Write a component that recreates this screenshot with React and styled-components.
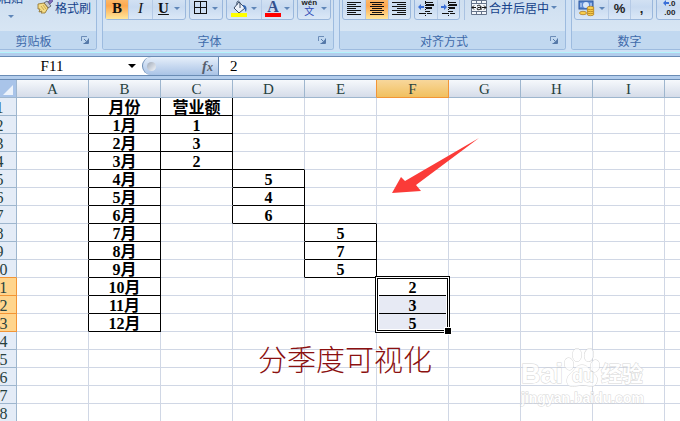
import styled, { createGlobalStyle, css } from "styled-components";

const GlobalStyle = createGlobalStyle`
    * {
        box-sizing: border-box;
    }
    body {
        margin: 0;
        overflow: hidden;
        font-family: "Liberation Sans", "Noto Sans CJK SC", sans-serif;
    }
    button,
    input {
        margin: 0;
        padding: 0;
        border: 0;
        background: none;
        font: inherit;
        color: inherit;
    }
`;

const COLUMNS = "ABCDEFGHIJKLMN".split("");
const ROW_COUNT = 24;

const cells = {
    B1: "月份",
    B2: "1月",
    B3: "2月",
    B4: "3月",
    B5: "4月",
    B6: "5月",
    B7: "6月",
    B8: "7月",
    B9: "8月",
    B10: "9月",
    B11: "10月",
    B12: "11月",
    B13: "12月",
    C1: "营业额",
    C2: "1",
    C3: "3",
    C4: "2",
    D5: "5",
    D6: "4",
    D7: "6",
    E8: "5",
    E9: "7",
    E10: "5",
    F11: "2",
    F12: "3",
    F13: "5",
};

const hasValue = (col, row) => Boolean(cells[`${COLUMNS[col]}${row}`]);
const isSelectedRow = (row) => row >= 11 && row <= 13;

function Caret() {
    return (
        <svg width="6" height="3" viewBox="0 0 6 3" aria-hidden="true">
            <path d="M0 0h6L3 3z" fill="#5f86b8" />
        </svg>
    );
}

function BrushIcon() {
    return (
        <svg width="16" height="16" viewBox="0 0 16 16" aria-hidden="true">
            <path d="M10 4l4-4 2 2-4 4z" fill="#7d6bb8" stroke="#4b3f86" strokeWidth="0.6" />
            <path d="M7 4l3-2 4 5-3 2z" fill="#c3c8d2" stroke="#4d535e" strokeWidth="0.8" />
            <path d="M1 5l6-1 4 5-3 5-4 0 1-2-3 1 1-3-2 0z" fill="#f4dc86" stroke="#8d6d28" strokeWidth="0.8" />
            <path d="M4 7l3 4M6 6l3 4" stroke="#c29b3f" strokeWidth="0.8" />
        </svg>
    );
}

function BorderIcon() {
    return (
        <svg width="14" height="14" viewBox="0 0 14 14" shapeRendering="crispEdges" aria-hidden="true">
            <path d="M.5.5h12v12h-12zM6.5 0v13M0 6.5h13" fill="none" stroke="#111" />
        </svg>
    );
}

function FillIcon() {
    return (
        <svg width="17" height="17" viewBox="0 0 17 17" aria-hidden="true">
            <path d="M3 8l5-6 6 6-6 5z" fill="#eef3fa" stroke="#3d4f69" />
            <path d="M6 5c-1-5 3-5 3-1v4" fill="none" stroke="#3d4f69" />
            <path d="M12 5c4 0 4 4 3 7-2-2 0-4-3-5z" fill="#3468b4" />
            <path d="M0 13h16v4H0z" fill="#ff0" />
        </svg>
    );
}

function AlignIcon({ type }) {
    const short = { left: 0, center: 2, right: 5 }[type];
    const len = type === "center" ? 10 : 9;
    return (
        <svg width="15" height="13" viewBox="0 0 15 13" shapeRendering="crispEdges" aria-hidden="true">
            {[0, 2, 4, 6, 8, 10, 12].map((y, i) => (
                <rect key={y} x={i % 2 ? short : 0} y={y} width={i % 2 ? len : 14} height="1" fill="#111" />
            ))}
        </svg>
    );
}

function IndentIcon({ increase }) {
    return (
        <svg width="16" height="15" viewBox="0 0 16 15" aria-hidden="true">
            <path d="M7 1.5h8M7 10.5h5M1 12.5h6M9 12.5h5" stroke="#111" shapeRendering="crispEdges" />
            <path d="M8 4h8M8 7h6" stroke="#111" strokeWidth="2" shapeRendering="crispEdges" />
            <path d="M7.5 0v15" stroke="#111" strokeDasharray="1 1" />
            <path d={increase ? "M6 6L3 3v2H0v2h3v2z" : "M0 6l3-3v2h3v2H3v2z"} fill="#3a6fd8" />
        </svg>
    );
}

function MergeIcon() {
    return (
        <svg width="16" height="15" viewBox="0 0 16 15" aria-hidden="true">
            <path d="M.5.5h15v14H.5zM.5 3.5h15M.5 11.5h15M5.5 0v3M10.5 0v3M5.5 12v3M10.5 12v3" fill="#f4f7fb" stroke="#66748a" />
            <path d="M1 7.5h4M11 7.5h4M3 5.5l-2 2 2 2M13 5.5l2 2-2 2" fill="none" stroke="#111" />
            <path d="M6 6c2-1.500 4-.5 4 1v3M10 7.500c-3-.5-4 .5-4 1.500s3 1 4-.5" fill="none" stroke="#111" />
        </svg>
    );
}

function CurrencyIcon() {
    return (
        <svg width="18" height="17" viewBox="0 0 18 17" aria-hidden="true">
            <rect x="1" y="1" width="14" height="8" fill="#5d8ad2" stroke="#28559d" />
            <ellipse cx="8" cy="5" rx="3" ry="3" fill="#d7e6fa" />
            <path d="M3 3v4M13 3v4" stroke="#d7e6fa" />
            {[14, 12, 10, 8].map((y) => (
                <ellipse key={y} cx="12.500" cy={y} rx="3.500" ry="1.700" fill="#f9cf4e" stroke="#a8741a" strokeWidth="0.7" />
            ))}
            <ellipse cx="5" cy="13" rx="3.500" ry="1.700" fill="#f9cf4e" stroke="#a8741a" strokeWidth="0.7" />
        </svg>
    );
}

function LauncherIcon() {
    return (
        <svg width="8" height="8" viewBox="0 0 8 8" aria-hidden="true">
            <path d="M.5 5V.5H6" fill="none" stroke="#6c8db8" />
            <path d="M3 3l2 2M7.500 2.500v5h-5" fill="none" stroke="#5579a9" />
            <path d="M3.500 7L7 3.500V7z" fill="#5579a9" />
        </svg>
    );
}

function Group({ title, width, children }) {
    return (
        <GroupWrap $width={width}>
            <GroupBody>{children}</GroupBody>
            <GroupCaption>
                <span>{title}</span>
                <Launcher type="button" aria-label={title}>
                    <LauncherIcon />
                </Launcher>
            </GroupCaption>
        </GroupWrap>
    );
}

function Ribbon() {
    return (
        <RibbonWrap>
            <Group title="剪贴板" width={110}>
                <PasteButton type="button">
                    <span>粘贴</span>
                    <Caret />
                </PasteButton>
                <TextButton type="button">
                    <BrushIcon />
                    格式刷
                </TextButton>
            </Group>
            <Group title="字体" width={232}>
                <Segment>
                    <Tool type="button" $w={22} $active>
                        <Glyph $bold>B</Glyph>
                    </Tool>
                    <Tool type="button" $w={24}>
                        <Glyph $italic>I</Glyph>
                    </Tool>
                    <Tool type="button" $w={33}>
                        <Glyph $bold $underline>U</Glyph>
                        <Caret />
                    </Tool>
                </Segment>
                <Segment>
                    <Tool type="button" $w={32} aria-label="边框">
                        <BorderIcon />
                        <Caret />
                    </Tool>
                </Segment>
                <Segment>
                    <Tool type="button" $w={34} aria-label="填充颜色">
                        <FillIcon />
                        <Caret />
                    </Tool>
                    <Tool type="button" $w={32}>
                        <FontColor>A</FontColor>
                        <Caret />
                    </Tool>
                </Segment>
                <Segment>
                    <Tool type="button" $w={32}>
                        <Phonetic>
                            <b>wén</b>
                            <span>文</span>
                        </Phonetic>
                        <Caret />
                    </Tool>
                </Segment>
            </Group>
            <Group title="对齐方式" width={227}>
                <Segment>
                    <Tool type="button" $w={22} aria-label="左对齐">
                        <AlignIcon type="left" />
                    </Tool>
                    <Tool type="button" $w={23} $active aria-label="居中">
                        <AlignIcon type="center" />
                    </Tool>
                    <Tool type="button" $w={22} aria-label="右对齐">
                        <AlignIcon type="right" />
                    </Tool>
                </Segment>
                <Segment>
                    <Tool type="button" $w={22} aria-label="减少缩进量">
                        <IndentIcon />
                    </Tool>
                    <Tool type="button" $w={22} aria-label="增加缩进量">
                        <IndentIcon increase />
                    </Tool>
                </Segment>
                <Separator />
                <TextButton type="button">
                    <MergeIcon />
                    合并后居中
                    <Caret />
                </TextButton>
            </Group>
            <Group title="数字" width={134}>
                <Segment>
                    <Tool type="button" $w={33} aria-label="会计数字格式">
                        <CurrencyIcon />
                        <Caret />
                    </Tool>
                    <Tool type="button" $w={22}>
                        <Symbol>%</Symbol>
                    </Tool>
                    <Tool type="button" $w={22}>
                        <Symbol>,</Symbol>
                    </Tool>
                </Segment>
                <Segment>
                    <Tool type="button" $w={24}>
                        <Decimal>
                            <span>
                                <svg width="6" height="6" viewBox="0 0 6 6" aria-hidden="true">
                                    <path d="M0 3l3-3v2h3v2H3v2z" fill="#3a6fd8" />
                                </svg>
                                .0
                            </span>
                            <span>.00</span>
                        </Decimal>
                    </Tool>
                    <Tool type="button" $w={24} aria-label="减少小数位数" />
                </Segment>
            </Group>
        </RibbonWrap>
    );
}

function FormulaBar() {
    return (
        <FormulaWrap>
            <NameInput aria-label="名称框" defaultValue="F11" />
            <NameArrow type="button" aria-label="名称">
                <svg width="8" height="4" viewBox="0 0 8 4" aria-hidden="true">
                    <path d="M0 0h8L4 4z" fill="#000" />
                </svg>
            </NameArrow>
            <FxHandle>
                <FxDot />
                <FxButton type="button">
                    f<small>x</small>
                </FxButton>
            </FxHandle>
            <FormulaInput aria-label="编辑栏" defaultValue="2" />
        </FormulaWrap>
    );
}

function Sheet() {
    const rows = Array.from({ length: ROW_COUNT }, (_, i) => i + 1);
    return (
        <SheetWrap>
            <Grid>
                <thead>
                    <tr>
                        <Corner>
                            <svg width="10" height="10" viewBox="0 0 10 10" aria-hidden="true">
                                <path d="M10 0v10H0z" fill="#edf3fb" />
                            </svg>
                        </Corner>
                        {COLUMNS.map((name) => (
                            <ColHead key={name} scope="col" $active={name === "F"} $beforeActive={name === "E"}>
                                {name}
                            </ColHead>
                        ))}
                    </tr>
                </thead>
                <tbody>
                    {rows.map((row) => (
                        <tr key={row}>
                            <RowHead scope="row" $active={isSelectedRow(row)} $beforeActive={row === 10}>
                                {row}
                            </RowHead>
                            {COLUMNS.map((name, col) => (
                                <Cell
                                    key={name}
                                    $right={hasValue(col, row) || hasValue(col + 1, row)}
                                    $bottom={hasValue(col, row) || hasValue(col, row + 1)}
                                    $shaded={name === "F" && (row === 12 || row === 13)}
                                >
                                    {cells[`${name}${row}`]}
                                    {name === "F" && row === 11 && <Selection />}
                                </Cell>
                            ))}
                        </tr>
                    ))}
                </tbody>
            </Grid>
            <Note>分季度可视化</Note>
            <Arrow width="90" height="60" viewBox="0 0 90 60" aria-hidden="true">
                <path d="M88 0L25 47l5 6-29 2 9-16 4 4z" fill="#fb3b38" />
            </Arrow>
            <Watermark>
                <Brand>
                    <span>Bai</span>
                    <Paw>
                        <svg width="38" height="42" viewBox="0 0 38 42" aria-hidden="true">
                            <g fill="#fff" stroke="#c8c8c8">
                                <ellipse cx="6" cy="18" rx="4.500" ry="6" transform="rotate(-10 6 18)" />
                                <ellipse cx="14" cy="9" rx="4.500" ry="6.500" />
                                <ellipse cx="26" cy="9" rx="4.500" ry="6.500" transform="rotate(10 26 9)" />
                                <ellipse cx="32" cy="20" rx="4.500" ry="6" transform="rotate(10 32 20)" />
                                <path d="M19 19c5 0 6 3 9 6s7 5 6 10-4 6-8 5-8-1-13 0-9 0-9-5 3-7 6-10 4-6 9-6z" />
                            </g>
                        </svg>
                        <b>du</b>
                    </Paw>
                    <span>经验</span>
                </Brand>
                <Site>jingyan.baidu.com</Site>
            </Watermark>
        </SheetWrap>
    );
}

function App() {
    return (
        <Page>
            <GlobalStyle />
            <Ribbon />
            <FormulaBar />
            <Sheet />
        </Page>
    );
}

const Page = styled.div`
    display: flex;
    flex-direction: column;
    height: 100vh;
    overflow: hidden;
    background: #b3cdec;
`;

const RibbonWrap = styled.div`
    display: flex;
    flex: none;
    gap: 5px;
    margin-left: -13px;
    height: 53px;
    padding-bottom: 2px;
    border-bottom: 1px solid #b4f4fb;
    background: #cfe1f5;
`;

const GroupWrap = styled.section`
    display: flex;
    flex: none;
    flex-direction: column;
    width: ${({ $width }) => $width}px;
    overflow: hidden;
    border: 1px solid #9dbbdf;
    border-top: 0;
    border-radius: 0 0 3px 3px;
    background: linear-gradient(#cfdff0, #dce9f6);
`;

const GroupBody = styled.div`
    display: flex;
    align-items: flex-end;
    flex: none;
    gap: 3px;
    height: 31px;
    padding: 0 2px 11px;
    color: #15428b;
    font-size: 12px;
`;

const GroupCaption = styled.div`
    display: flex;
    align-items: center;
    flex: 1;
    background: #c1d8f0;
    color: #3e6aaa;
    font-size: 12px;
    line-height: 18px;
    span {
        flex: 1;
        padding-top: 2px;
        text-align: center;
    }
`;

const Launcher = styled.button`
    display: flex;
    width: 14px;
    height: 14px;
    margin-right: 3px;
    padding: 2px;
`;

const Segment = styled.div`
    display: flex;
    flex: none;
    height: 26px;
    border: 1px solid #9ab7dc;
    border-radius: 3px;
    background: linear-gradient(#d9e6f5, #c8daf0 50%, #dbe8f7);
`;

const Tool = styled.button`
    display: flex;
    align-items: center;
    justify-content: space-evenly;
    width: ${({ $w }) => $w}px;
    height: 24px;
    padding-top: 2px;
    & + & {
        border-left: 1px solid #b5cae6;
    }
    ${({ $active }) =>
        $active &&
        css`
            background: linear-gradient(#fbc57b, #fda850 45%, #ffe79a);
        `}
`;

const Glyph = styled.span`
    font-family: "Liberation Serif", serif;
    font-size: 15px;
    line-height: 16px;
    color: #111;
    font-weight: ${({ $bold }) => ($bold ? 700 : 400)};
    font-style: ${({ $italic }) => ($italic ? "italic" : "normal")};
    text-decoration: ${({ $underline }) => ($underline ? "underline" : "none")};
`;

const FontColor = styled.span`
    width: 16px;
    border-bottom: 4px solid #f00;
    color: #34508f;
    font: 700 16px/13px "Liberation Serif", serif;
    text-align: center;
`;

const Phonetic = styled.span`
    display: flex;
    flex-direction: column;
    align-items: center;
    color: #2f4bb5;
    font-size: 10px;
    line-height: 10px;
    b {
        font-size: 8px;
        line-height: 8px;
        color: #222;
    }
`;

const Symbol = styled.span`
    color: #222;
    font-size: 13px;
    font-weight: 700;
`;

const Decimal = styled.span`
    display: flex;
    flex-direction: column;
    align-items: flex-end;
    color: #222;
    font-size: 8px;
    font-weight: 700;
    line-height: 9px;
`;

const Separator = styled.span`
    width: 1px;
    height: 24px;
    margin: 0 1px;
    background: #a9c2e2;
`;

const TextButton = styled.button`
    display: flex;
    align-items: center;
    flex: none;
    gap: 2px;
    height: 26px;
    padding: 0 2px;
    white-space: nowrap;
`;

const PasteButton = styled.button`
    display: flex;
    flex-direction: column;
    align-items: center;
    gap: 8px;
    width: 42px;
    padding-bottom: 2px;
    line-height: 16px;
`;

const FormulaWrap = styled.div`
    display: flex;
    flex: none;
    height: 20px;
    margin: 3px 0;
    border: 1px solid #6a8cb5;
    border-width: 1px 0;
    background: #fff;
    font-family: "Liberation Serif", "Noto Sans CJK SC", serif;
    font-size: 15px;
`;

const NameInput = styled.input`
    width: 104px;
    height: 18px;
    padding-top: 1px;
    text-align: center;
`;

const NameArrow = styled.button`
    display: flex;
    align-items: center;
    justify-content: flex-end;
    width: 32px;
    height: 18px;
`;

const FxHandle = styled.div`
    display: flex;
    align-items: center;
    justify-content: space-between;
    width: 77px;
    height: 18px;
    margin-left: 6px;
    padding: 0 5px 0 4px;
    border-left: 1px solid #6a8cb5;
    border-right: 1px solid #6a8cb5;
    border-radius: 9px 0 0 9px;
    background: linear-gradient(#e6effa, #a9c3e6);
`;

const FxDot = styled.span`
    width: 9px;
    height: 9px;
    border-radius: 50%;
    background: linear-gradient(135deg, #9fa9b8, #f4f7fb);
`;

const FxButton = styled.button`
    color: #56606e;
    font-size: 15px;
    font-style: italic;
    font-weight: 700;
    line-height: 16px;
    small {
        font-size: 12px;
    }
`;

const FormulaInput = styled.input`
    flex: 1;
    min-width: 0;
    height: 18px;
    padding: 1px 0 0 11px;
`;

const SheetWrap = styled.main`
    position: relative;
    flex: 1;
    overflow: hidden;
    border-top: 1px solid #6a8cb5;
    background: #fff;
`;

const Grid = styled.table`
    width: max-content;
    margin-left: -17px;
    border-collapse: separate;
    border-spacing: 0;
    table-layout: fixed;
    font-family: "Liberation Serif", "Noto Sans CJK SC", serif;
    font-size: 16px;
    line-height: 15px;
    th,
    td {
        height: 18px;
        padding: 2px 0 0;
        text-align: center;
        white-space: nowrap;
    }
    th {
        color: #27413e;
        font-weight: 400;
    }
`;

const Corner = styled.td`
    width: 34px;
    min-width: 34px;
    border-right: 1px solid #9eb6ce;
    border-bottom: 1px solid #9eb6ce;
    background: #a9c4e9;
    svg {
        display: block;
        margin: 0 3px 0 auto;
    }
`;

const ColHead = styled.th`
    width: 72px;
    min-width: 72px;
    border-right: 1px solid ${({ $active, $beforeActive }) => ($active || $beforeActive ? "#f29536" : "#9eb6ce")};
    border-bottom: 1px solid ${({ $active }) => ($active ? "#f29536" : "#9eb6ce")};
    background: ${({ $active }) => ($active ? "linear-gradient(#f8d79b, #f1c05f)" : "linear-gradient(#f6f9fc, #d5dce9)")};
    font-size: 15px;
`;

const RowHead = styled.th`
    border-right: 1px solid ${({ $active }) => ($active ? "#f29536" : "#9eb6ce")};
    border-bottom: 1px solid ${({ $active, $beforeActive }) => ($active || $beforeActive ? "#f29536" : "#9eb6ce")};
    background: ${({ $active }) => ($active ? "#ffd58d" : "#e4ecf7")};
`;

const Cell = styled.td`
    position: relative;
    border-right: 1px solid ${({ $right }) => ($right ? "#000" : "#d0d7e5")};
    border-bottom: 1px solid ${({ $bottom }) => ($bottom ? "#000" : "#d0d7e5")};
    background: ${({ $shaded }) => ($shaded ? "#e7eaf4" : "#fff")};
    color: #000;
    font-weight: 700;
`;

const Selection = styled.div`
    position: absolute;
    z-index: 1;
    top: -2px;
    left: -2px;
    width: 75px;
    height: 57px;
    border: 1px solid #000;
    box-shadow:
        inset 0 0 0 1px #fff,
        inset 0 0 0 2px #000,
        inset 0 0 0 3px #fff;
    &::after {
        content: "";
        position: absolute;
        right: -3px;
        bottom: -3px;
        width: 6px;
        height: 6px;
        border: 1px solid #fff;
        background: #000;
    }
`;

const Note = styled.p`
    position: absolute;
    top: 260px;
    left: 258px;
    margin: 0;
    color: #8b1010;
    font-family: "Noto Sans CJK SC", sans-serif;
    font-size: 29px;
    font-weight: 300;
    line-height: 36px;
`;

const Arrow = styled.svg`
    position: absolute;
    top: 58px;
    left: 391px;
`;

const Watermark = styled.div`
    position: absolute;
    top: 266px;
    left: 521px;
    opacity: 0.75;
    color: #fff;
    font-family: "Liberation Sans", "Noto Sans CJK SC", sans-serif;
    font-weight: 700;
    -webkit-text-stroke: 1px #c8c8c8;
    paint-order: stroke fill;
`;

const Brand = styled.div`
    display: flex;
    align-items: flex-end;
    font-size: 27px;
    line-height: 28px;
    span:last-child {
        font-size: 21px;
    }
`;

const Paw = styled.div`
    position: relative;
    height: 42px;
    b {
        position: absolute;
        left: 9px;
        bottom: 3px;
        font-size: 18px;
        line-height: 18px;
    }
`;

const Site = styled.div`
    font-size: 14px;
    line-height: 20px;
`;

export default App;
